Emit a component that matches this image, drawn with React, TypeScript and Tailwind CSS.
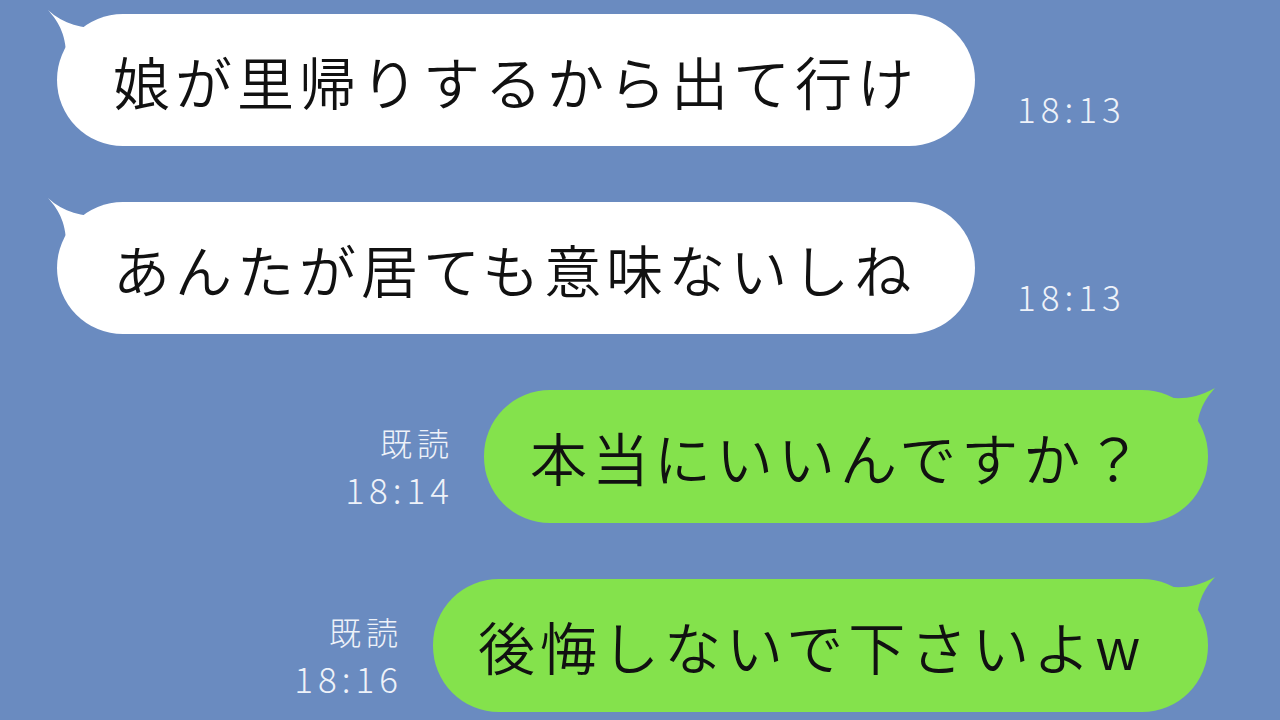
import React from "react";

const JP = { fontFamily: '"Noto Sans CJK JP", "Noto Sans", sans-serif' };

function LeftTail() {
  return (
    <svg className="absolute left-[-12px] top-[-6px]" width="80" height="60" viewBox="0 0 80 60">
      <path d="M3,2 C10,10 20,22 21,44 L70,44 L70,20 C48,22 22,20 3,2 Z" fill="#ffffff" />
    </svg>
  );
}

function RightTail() {
  return (
    <svg className="absolute right-[-10px] top-[-4px]" width="80" height="60" viewBox="0 0 80 60">
      <path d="M77,2 C70,10 60,22 59,44 L10,44 L10,6 C30,14 52,16 77,2 Z" fill="#84e24c" />
    </svg>
  );
}

function Left({ text, time, width }: { text: string; time: string; width: string }) {
  return (
    <div className="flex items-end pl-[57px]">
      <div className={`relative h-[132px] ${width} rounded-[66px] bg-white flex items-center pl-[56px]`}>
        <LeftTail />
        <span className="relative text-[57px] font-[350] leading-none tracking-[5px] text-[#111]" style={JP}>{text}</span>
      </div>
      <div className="ml-[42px] mb-[21px] text-[35px] font-light leading-none tracking-[5px] text-[#eef2f9]" style={JP}>{time}</div>
    </div>
  );
}

function Right({ text, time, width, pl }: { text: string; time: string; width: string; pl: string }) {
  return (
    <div className="flex items-end justify-end pr-[72px]">
      <div className="mr-[30px] mb-[17px] flex flex-col items-end text-[#eef2f9] font-light" style={JP}>
        <div className="text-[32px] leading-none tracking-[5px] mb-[13px]">既読</div>
        <div className="text-[35px] leading-none tracking-[5px]">{time}</div>
      </div>
      <div className={`relative h-[133px] ${width} rounded-[66px] bg-[#84e24c] flex items-center ${pl}`}>
        <RightTail />
        <span className="relative text-[57px] font-[350] leading-none tracking-[5px] text-[#111]" style={JP}>{text}</span>
      </div>
    </div>
  );
}

export default function App() {
  return (
    <div className="w-[1280px] h-[720px] overflow-hidden bg-[#6a8bc0] pt-[14px] flex flex-col gap-[56px]">
      <Left text="娘が里帰りするから出て行け" time="18:13" width="w-[918px]" />
      <Left text="あんたが居ても意味ないしね" time="18:13" width="w-[918px]" />
      <Right text="本当にいいんですか？" time="18:14" width="w-[724px]" pl="pl-[46px]" />
      <Right text="後悔しないで下さいよw" time="18:16" width="w-[775px]" pl="pl-[45px]" />
    </div>
  );
}
